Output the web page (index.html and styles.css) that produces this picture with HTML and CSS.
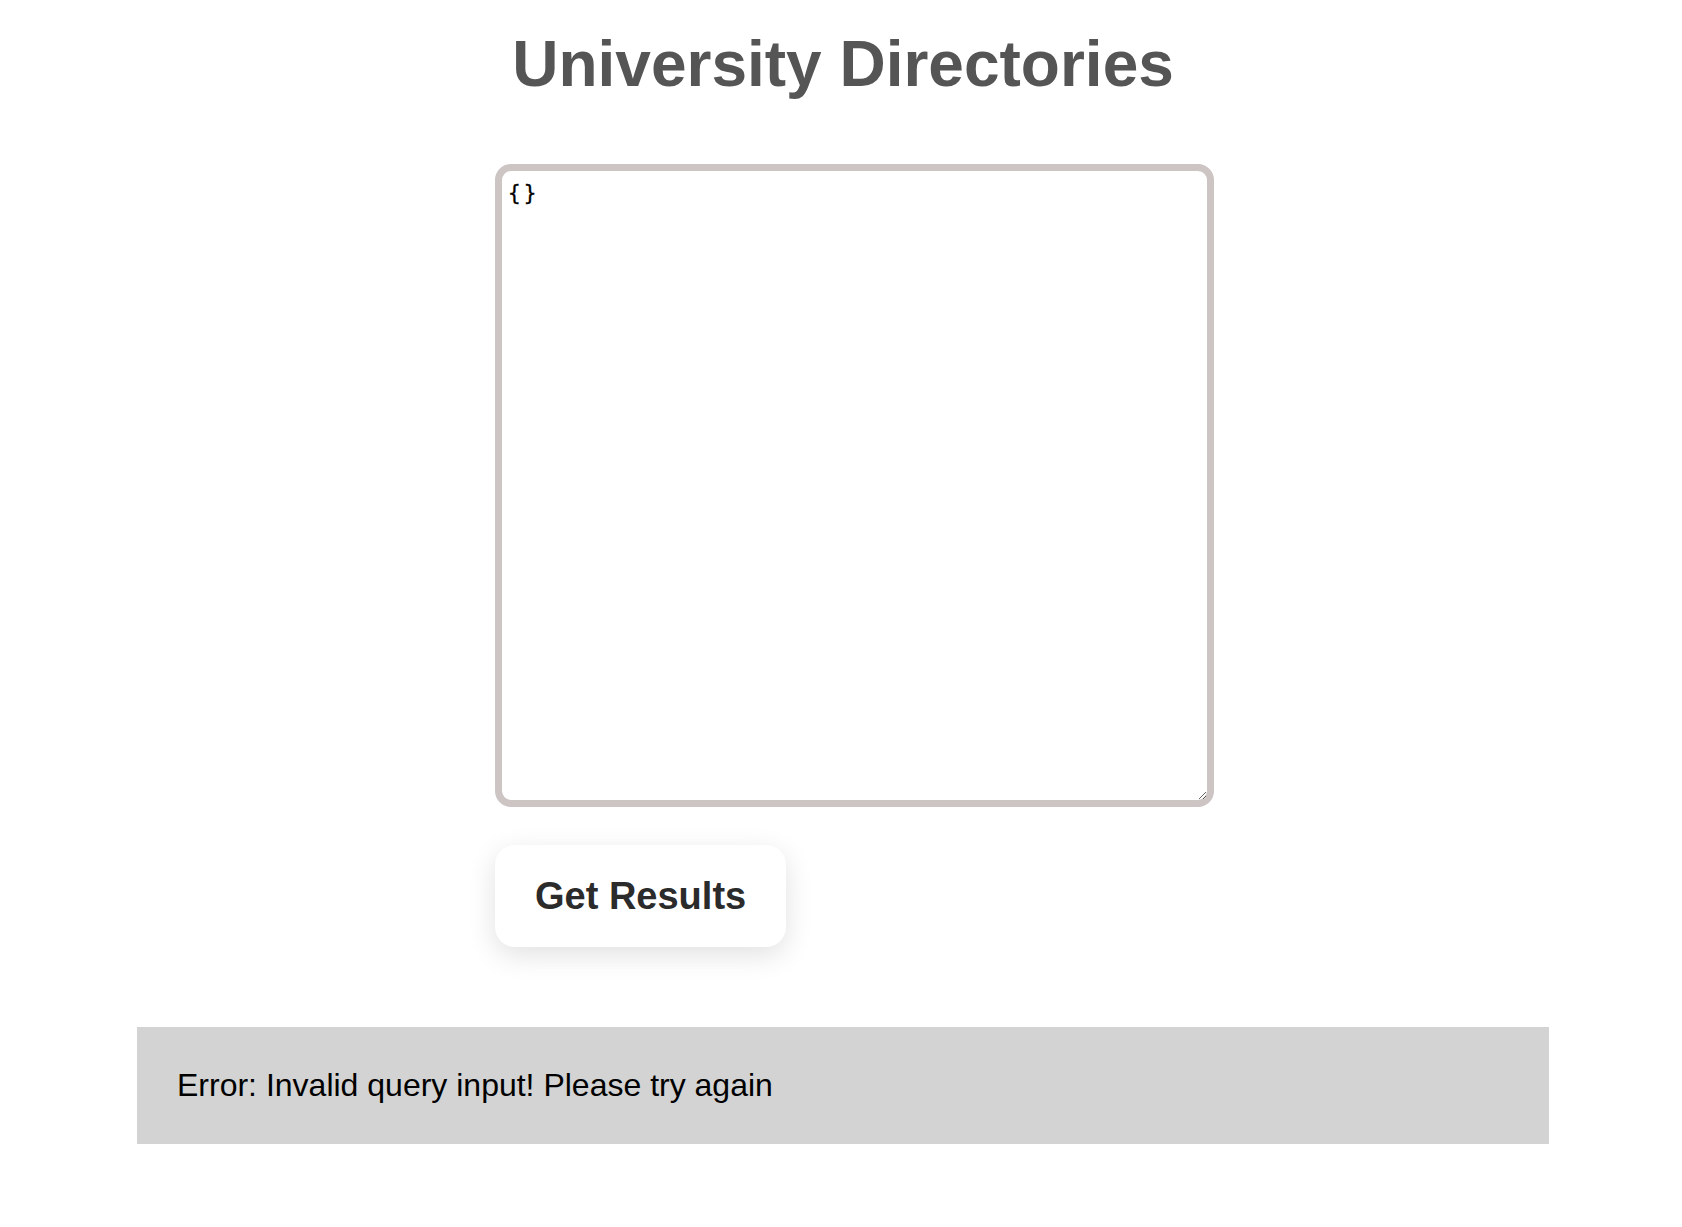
FILE: index.html
```html
<!DOCTYPE html>
<html lang="en">
<head>
<meta charset="utf-8">
<title>University Directories</title>
<link rel="stylesheet" href="styles.css">
</head>
<body>
<h1 class="title">University Directories</h1>
<form class="query-form">
  <textarea class="query-input">{}</textarea>
  <button type="button" class="submit-btn">Get Results</button>
</form>
<div class="error-box">Error: Invalid query input! Please try again</div>
</body>
</html>
```
FILE: styles.css
```css
body {
  margin: 0;
  padding: 0 0 0 4px;
  font-family: "Liberation Sans", Arial, sans-serif;
  background: #ffffff;
}

.title {
  margin: 27px 0 0;
  text-align: center;
  font-size: 64px;
  line-height: 74px;
  font-weight: 700;
  color: #555555;
}

.query-form {
  width: 719px;
  margin: 63px 0 0 calc(50% - 348px);
  display: flex;
  flex-direction: column;
  align-items: flex-start;
}

.query-input {
  display: block;
  box-sizing: border-box;
  width: 719px;
  height: 643px;
  border: 7px solid #cdc4c4;
  border-radius: 16px;
  padding: 11px 6px;
  font-family: "DejaVu Sans Mono", monospace;
  font-size: 21px;
  font-weight: 500;
  letter-spacing: 3px;
  line-height: 22px;
  color: #000;
  -webkit-text-stroke: 0.3px #000;
  outline: none;
  margin: 0;
}

.submit-btn {
  margin-top: 38px;
  padding: 29px 40px;
  border: none;
  border-radius: 20px;
  background: #ffffff;
  box-shadow: 0 8px 28px rgba(0, 0, 0, 0.12);
  font-family: "Liberation Sans", Arial, sans-serif;
  font-size: 38px;
  line-height: 44px;
  font-weight: 700;
  color: #2b2b2b;
  cursor: pointer;
}

.error-box {
  width: 1412px;
  box-sizing: border-box;
  margin: 80px auto 0;
  padding: 40px;
  background: #d3d3d3;
  font-size: 32px;
  line-height: 37px;
  color: #000;
}
```
